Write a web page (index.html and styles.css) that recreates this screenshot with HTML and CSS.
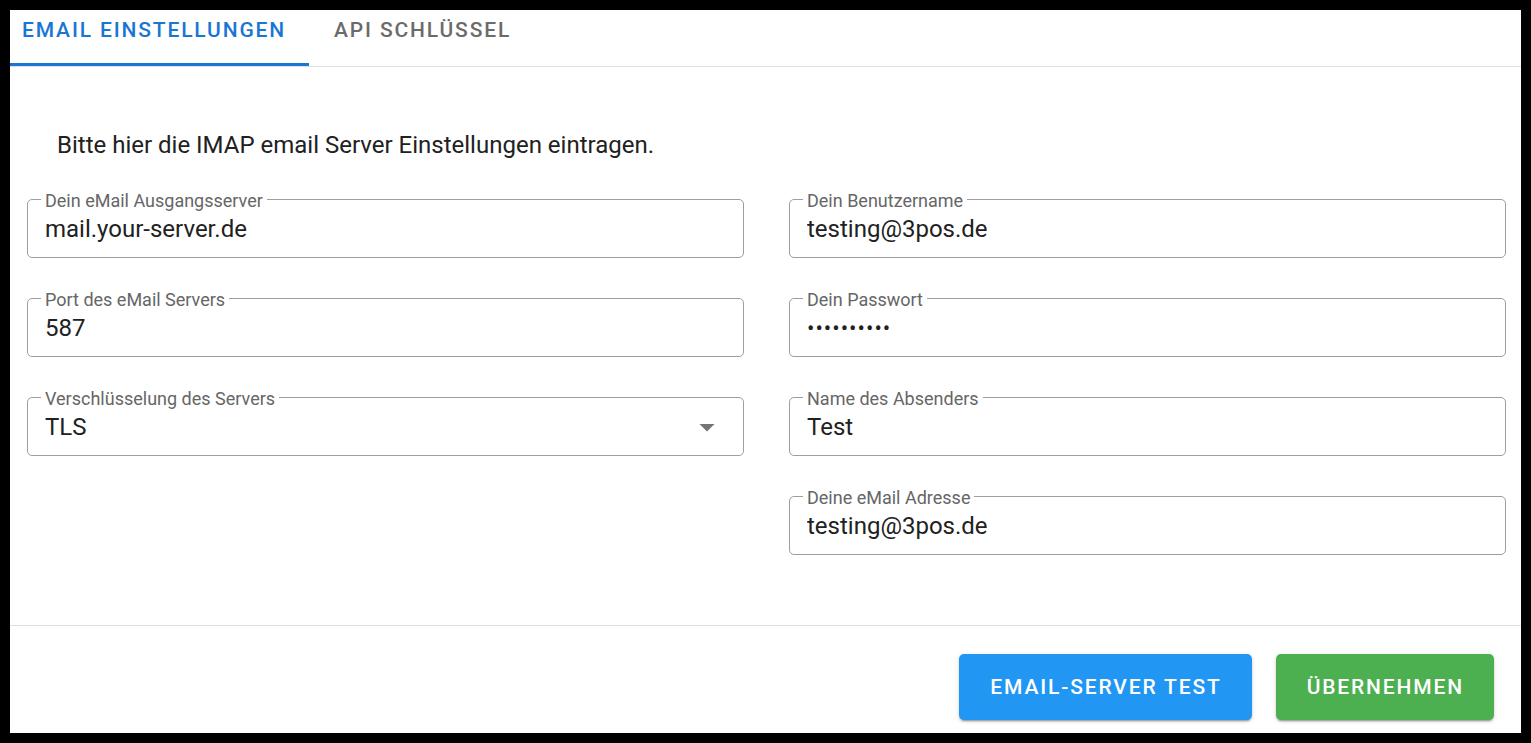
FILE: index.html
```html
<!DOCTYPE html>
<html lang="de">
<head>
  <meta charset="UTF-8" />
  <title>Email Einstellungen</title>
  <link rel="stylesheet" href="styles.css">
</head>
<body>
  <div class="panel">
    <div class="tabs">
      <button class="tab active">Email Einstellungen</button>
      <button class="tab">API Schlüssel</button>
    </div>

    <div class="content">
      <p class="intro">Bitte hier die IMAP email Server Einstellungen eintragen.</p>

      <div class="columns">
        <div class="col">
          <fieldset class="field">
            <legend>Dein eMail Ausgangsserver</legend>
            <input type="text" value="mail.your-server.de" />
          </fieldset>
          <fieldset class="field">
            <legend>Port des eMail Servers</legend>
            <input type="text" value="587" />
          </fieldset>
          <fieldset class="field">
            <legend>Verschlüsselung des Servers</legend>
            <div class="select-row">
              <select>
                <option>TLS</option>
                <option>SSL</option>
                <option>Keine</option>
              </select>
              <svg class="arrow" viewBox="0 0 24 24" width="36" height="36"><path d="M7 10l5 5 5-5z" fill="#757575"/></svg>
            </div>
          </fieldset>
        </div>

        <div class="col">
          <fieldset class="field">
            <legend>Dein Benutzername</legend>
            <input type="text" value="testing@3pos.de" />
          </fieldset>
          <fieldset class="field">
            <legend>Dein Passwort</legend>
            <input type="password" class="pw" value="geheim1234" />
          </fieldset>
          <fieldset class="field">
            <legend>Name des Absenders</legend>
            <input type="text" value="Test" />
          </fieldset>
          <fieldset class="field">
            <legend>Deine eMail Adresse</legend>
            <input type="text" value="testing@3pos.de" />
          </fieldset>
        </div>
      </div>
    </div>

    <div class="footer">
      <button class="btn btn-blue">Email-Server Test</button>
      <button class="btn btn-green">Übernehmen</button>
    </div>
  </div>
</body>
</html>
```

FILE: styles.css
```css
* {
  margin: 0;
  padding: 0;
  box-sizing: border-box;
  font-family: Roboto, "Liberation Sans", sans-serif;
}

body {
  background: #000;
  padding: 10px;
}

.panel {
  background: #fff;
  height: 723px;
  display: flex;
  flex-direction: column;
}

.tabs {
  display: flex;
  height: 57px;
  border-bottom: 1px solid #e0e0e0;
}

.tab {
  background: none;
  border: none;
  border-bottom: 3px solid transparent;
  height: 56px;
  padding: 10px 0 0 25px;
  text-align: left;
  align-self: flex-start;
  display: flex;
  align-items: flex-start;
  font-size: 21px;
  line-height: 21px;
  font-weight: 500;
  letter-spacing: 1.85px;
  text-transform: uppercase;
  color: #6b6b6b;
  cursor: pointer;
}

.tab.active {
  width: 299px;
  padding-left: 12px;
  color: #1976d2;
  border-bottom-color: #1976d2;
}

.content {
  padding: 0 15px 0 17px;
}

.intro {
  margin: 66px 0 0 30px;
  font-size: 24px;
  line-height: 24px;
  color: #212121;
}

.columns {
  display: grid;
  grid-template-columns: 1fr 1fr;
  column-gap: 45px;
  margin-top: 31px;
}

.col {
  display: flex;
  flex-direction: column;
  gap: 29px;
}

.field {
  border: 1px solid #9e9e9e;
  border-radius: 5px;
  padding: 0 0 5px 17px;
  min-width: 0;
}

.field legend {
  font-size: 18px;
  line-height: 18px;
  color: #666;
  padding: 4px 4px 0;
  margin-left: -4px;
}

.field input,
.field select {
  display: block;
  width: 100%;
  height: 42px;
  padding-bottom: 4px;
  border: none;
  outline: none;
  background: none;
  font-size: 24px;
  color: #212121;
}

.field .pw {
  font-size: 22px;
  letter-spacing: 1px;
}

.select-row {
  display: flex;
  align-items: flex-start;
}

.select-row select {
  flex: 1;
  appearance: none;
  -webkit-appearance: none;
}

.arrow {
  margin: 1px 18px 0 0;
  flex-shrink: 0;
}

.footer {
  margin-top: auto;
  border-top: 1px solid #e0e0e0;
  padding: 28px 27px 13px 0;
  display: flex;
  justify-content: flex-end;
  gap: 24px;
}

.btn {
  height: 66px;
  padding: 0 30px 0 31px;
  border: none;
  border-radius: 5px;
  color: #fff;
  font-size: 21px;
  font-weight: 500;
  letter-spacing: 1.85px;
  text-transform: uppercase;
  cursor: pointer;
  box-shadow: 0 3px 1px -2px rgba(0, 0, 0, 0.2), 0 2px 2px 0 rgba(0, 0, 0, 0.14), 0 1px 5px 0 rgba(0, 0, 0, 0.12);
}

.btn-blue {
  background-color: #2196f3;
}

.btn-green {
  background-color: #4caf50;
}
```
